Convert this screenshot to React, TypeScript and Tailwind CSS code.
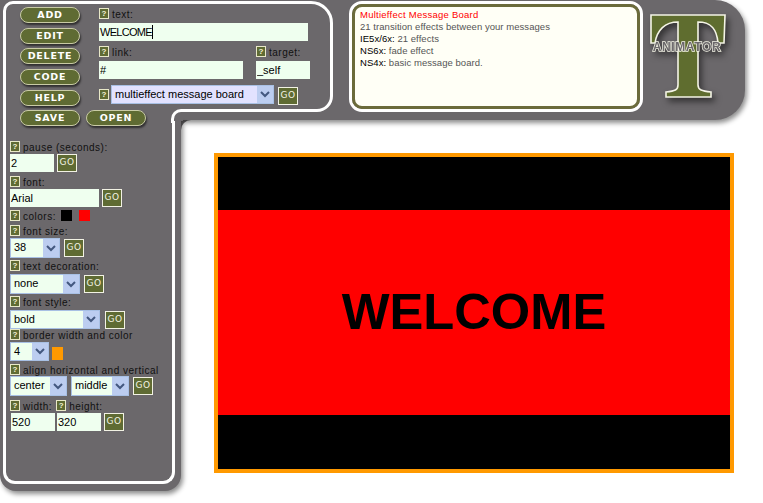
const labelFont = "font-['Liberation_Sans',Arial,sans-serif] text-[10px] leading-[11px] tracking-[0.5px] text-[#111] pt-[1px]"
const fieldFont = "font-['Liberation_Sans',Arial,sans-serif] text-[11px] text-black"

function Help() {
  return (
    <span className="flex h-[11px] w-[10px] shrink-0 items-center justify-center border border-[#e8e8c8] bg-[#5f6b33] font-['Liberation_Sans',sans-serif] text-[8px] font-bold leading-none text-[#f4f4d8]">
      ?
    </span>
  )
}

function Label({ text, className = '' }: { text: string; className?: string }) {
  return (
    <div className={`flex h-[11px] items-center gap-[3px] ${className}`}>
      <Help />
      <span className={labelFont}>{text}</span>
    </div>
  )
}

function Go({ className = '' }: { className?: string }) {
  return (
    <button className={`flex h-[18px] w-[20px] shrink-0 items-center justify-center border-[1.5px] border-[#f2f2e4] bg-[#5f6b33] font-['DejaVu_Sans',sans-serif] text-[9px] tracking-[0.5px] text-[#f2f2e4] ${className}`}>
      GO
    </button>
  )
}

function Pill({ text }: { text: string }) {
  return (
    <button className="flex h-[16px] w-[60px] shrink-0 items-center justify-center rounded-full border-[1.5px] border-[#c9cba6] bg-[#5f6b33] font-['DejaVu_Sans',sans-serif] text-[9.5px] font-bold tracking-[0.8px] text-white shadow-[1px_2px_2px_rgba(0,0,0,0.55)]">
      {text}
    </button>
  )
}

function Field({ value, className = '' }: { value: string; className?: string }) {
  return (
    <input
      readOnly
      value={value}
      className={`h-[18px] bg-[#efffef] pl-[1px] outline-none ${fieldFont} ${className}`}
    />
  )
}

function Drop({ value, className = '', tint = 'bg-[#efffef]' }: { value: string; className?: string; tint?: string }) {
  return (
    <div className={`flex items-stretch border-[1.5px] border-[#a8c0e4] ${tint} ${className}`}>
      <span className={`flex-1 truncate pl-[3px] leading-[16px] ${fieldFont}`}>{value}</span>
      <span className="flex w-[16px] items-center justify-center bg-[#bccdf0]">
        <svg width="10" height="7" viewBox="0 0 10 7" fill="none" stroke="#43587f" strokeWidth="2">
          <path d="M1 1l4 4 4-4" />
        </svg>
      </span>
    </div>
  )
}

function Logo() {
  return (
    <svg width="92" height="110" viewBox="0 0 92 110" className="ml-[5px] shrink-0 drop-shadow-[3px_4px_3px_rgba(0,0,0,0.5)]">
      <path
        d="M3 15H77L76 43H70C69 30 64 22 50 22V85C50 90 54 91 63 92V97H18V92C27 91 30 90 30 85V22C17 22 9 30 7 43H3Z"
        fill="#5f6d2f"
        stroke="#f4f4e6"
        strokeWidth="1.6"
      />
      <text
        x="39"
        y="51"
        textAnchor="middle"
        fontFamily="'Liberation Sans', sans-serif"
        fontWeight="700"
        fontSize="12"
        fill="#6b686b"
        stroke="#f4f4e6"
        strokeWidth="1.4"
        paintOrder="stroke"
        letterSpacing="0.6"
      >
        ANIMATOR
      </text>
    </svg>
  )
}

export default function App() {
  return (
    <div className="flex h-[503px] w-[763px] flex-col overflow-hidden bg-white">

      {/* top bar */}
      <div className="relative z-10 flex h-[120px] w-[745px] shrink-0 items-start rounded-r-[30px] bg-[#6b686b] shadow-[2px_3px_5px_rgba(0,0,0,0.45)]">
        <div className="ml-[3px] mt-[1px] flex h-[111px] w-[330px] shrink-0 gap-[19px] rounded-tl-[10px] rounded-tr-[22px] rounded-br-[16px] border-[3px] border-white pl-[14px] pt-[3px]">
          <div className="flex flex-col gap-[4.7px]">
            <Pill text="ADD" />
            <Pill text="EDIT" />
            <Pill text="DELETE" />
            <Pill text="CODE" />
            <Pill text="HELP" />
          </div>
          <div className="flex flex-col pt-[1px]">
            <Label text="text:" />
            <div className="mt-[4px] flex h-[18px] w-[209px] items-center bg-[#efffef] pl-[1px]">
              <span className={`${fieldFont} tracking-[-0.7px]`}>WELCOME</span>
              <span className="h-[14px] w-[1px] bg-black" />
            </div>
            <div className="mt-[5px] flex gap-[13px]">
              <div className="flex flex-col gap-[4px]">
                <Label text="link:" />
                <Field value="#" className="w-[144px]" />
              </div>
              <div className="flex flex-col gap-[4px]">
                <Label text="target:" />
                <Field value="_self" className="w-[54px]" />
              </div>
            </div>
            <div className="mt-[5px] flex items-center gap-[2px]">
              <Help />
              <Drop value="multieffect message board" tint="bg-[#e2e2ff]" className="h-[19px] w-[163px]" />
              <Go className="ml-[2px] mt-[3px]" />
            </div>
          </div>
        </div>

        <div className="ml-[16px] mt-[1px] h-[111px] w-[294px] shrink-0 rounded-[13px] border-[3px] border-white">
          <div className="h-full rounded-[10px] border-[3px] border-[#6b6b3b] bg-[#fffff6] pl-[5px] pt-[2px] font-['Liberation_Sans',sans-serif] text-[9.5px] leading-[12px] tracking-[0.05px] text-[#555]">
            <div className="tracking-[0.25px] text-[#ff0000]">Multieffect Message Board</div>
            <div>21 transition effects between your messages</div>
            <div><span className="text-black">IE5x/6x:</span> 21 effects</div>
            <div><span className="text-black">NS6x:</span> fade effect</div>
            <div><span className="text-black">NS4x:</span> basic message board.</div>
          </div>
        </div>

        <Logo />
      </div>

      <div className="flex min-h-0 flex-1">
        {/* left column */}
        <div className="relative z-10 h-[371px] w-[181px] shrink-0 rounded-b-[16px] bg-[#6b686b] pl-[3px] shadow-[2px_3px_5px_rgba(0,0,0,0.45)]">
          <div className="relative -mt-[11px] flex h-[375px] w-[172px] flex-col rounded-b-[12px] border-x-[3px] border-b-[3px] border-white bg-[#6b686b] pl-[4px]">
            <div className="absolute left-[165px] top-0 h-[12px] w-[12px] bg-[#6b686b]">
              <div className="h-[14px] w-[14px] rounded-tl-[10px] border-l-[3px] border-t-[3px] border-white" />
            </div>

            <div className="ml-[10px] mt-[1px] flex gap-[6px]">
              <Pill text="SAVE" />
              <Pill text="OPEN" />
            </div>

            <Label text="pause (seconds):" className="mt-[15px]" />
            <div className="mt-[2px] flex gap-[3px]">
              <Field value="2" className="w-[44px]" />
              <Go />
            </div>

            <Label text="font:" className="mt-[4px]" />
            <div className="mt-[2px] flex gap-[3px]">
              <Field value="Arial" className="w-[89px]" />
              <Go />
            </div>

            <div className="mt-[3px] flex h-[11px] items-center gap-[3px]">
              <Help />
              <span className={labelFont}>colors:</span>
              <span className="ml-[2px] h-[11px] w-[11px] bg-black" />
              <span className="ml-[4px] h-[11px] w-[11px] bg-[#ff0000]" />
            </div>

            <Label text="font size:" className="mt-[4px]" />
            <div className="mt-[2px] flex items-center gap-[4px]">
              <Drop value="38" className="h-[20px] w-[50px]" />
              <Go />
            </div>

            <Label text="text decoration:" className="mt-[2px]" />
            <div className="mt-[3px] flex items-center gap-[4px]">
              <Drop value="none" className="h-[20px] w-[70px]" />
              <Go />
            </div>

            <Label text="font style:" className="mt-[2px]" />
            <div className="mt-[3px] flex items-center gap-[5px]">
              <Drop value="bold" className="h-[19px] w-[90px]" />
              <Go />
            </div>

            <Label text="border width and color" />
            <div className="mt-[2px] flex items-center gap-[3px]">
              <Drop value="4" className="h-[19px] w-[39px]" />
              <span className="mt-[3px] h-[13px] w-[11px] bg-[#ff9900]" />
            </div>

            <Label text="align horizontal and vertical" className="mt-[3px]" />
            <div className="mt-[1px] flex items-center gap-[4px]">
              <Drop value="center" className="h-[20px] w-[57px]" />
              <Drop value="middle" className="h-[20px] w-[58px]" />
              <Go />
            </div>

            <div className="mt-[4px] flex gap-[4px]">
              <Label text="width:" />
              <Label text="height:" />
            </div>
            <div className="ml-[1px] mt-[2px] flex gap-[2px]">
              <Field value="520" className="w-[44px]" />
              <Field value="320" className="w-[44px]" />
              <Go className="ml-[1px]" />
            </div>
          </div>
        </div>

        {/* preview area */}
        <div className="flex-1 bg-[#6b686b]">
          <div className="h-full rounded-tl-[10px] bg-white pl-[33px] pt-[33px]">
            <div className="flex h-[320px] w-[520px] flex-col border-4 border-[#ff9900] bg-black">
              <div className="mt-[53px] flex h-[205px] items-center justify-center bg-[#ff0000] font-['Liberation_Sans',Arial,sans-serif] text-[38pt] font-bold leading-none text-black">
                WELCOME
              </div>
            </div>
          </div>
        </div>
      </div>
    </div>
  )
}
